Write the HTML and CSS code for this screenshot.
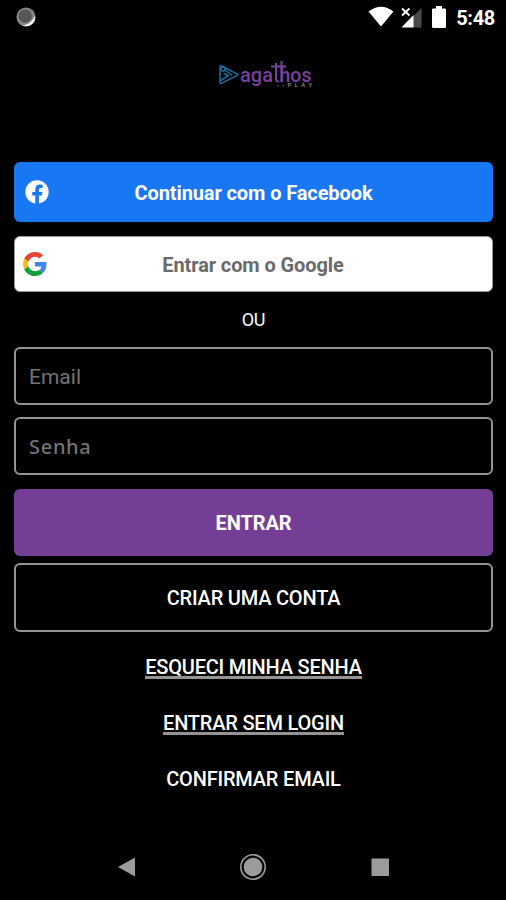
FILE: index.html
```
<!DOCTYPE html>
<html lang="pt-BR">
<head>
    <meta charset="UTF-8">
    <meta name="viewport" content="width=device-width, initial-scale=1.0">
    <title>Agathos Play</title>
    <link rel="stylesheet" href="styles.css">
</head>
<body>
    <header class="status-bar">
        <svg class="moon" width="20" height="20" viewBox="0 0 20 20">
            <circle cx="10" cy="10" r="9.6" fill="#858585"/>
            <path d="M19.2 9a9.4 9.4 0 0 1-13 9.6Q14 18 19.2 9z" fill="#f4f4f4"/>
            <circle cx="9.2" cy="9.2" r="6.6" fill="#565656"/>
        </svg>
        <div class="status-icons">
            <svg class="wifi" width="26" height="22" viewBox="0 0 26 22">
                <path d="M.5 5.5Q13-4 25.500 5.500L13 20.500z" fill="#fff"/>
            </svg>
            <svg class="signal" width="22" height="21" viewBox="0 0 22 21">
                <path d="M20.500 1v19.500H12V9.500z" fill="#4a4a4a"/>
                <path d="M12.500 8v12.500H.5z" fill="#fff"/>
                <path d="M1 1.500l7.500 7M8.500 1.500l-7.500 7" stroke="#fff" stroke-width="1.900"/>
            </svg>
            <svg class="battery" width="14" height="22" viewBox="0 0 14 22">
                <path d="M4 0h6v2.500h2.800q1.200 0 1.200 1.200v17q0 1.300-1.200 1.300H1.200Q0 22 0 20.700v-17Q0 2.500 1.200 2.500H4z" fill="#fff"/>
            </svg>
            <span class="clock">5:48</span>
        </div>
    </header>

    <main class="login">
        <svg class="logo" width="96" height="30" viewBox="0 0 96 30">
            <g fill="none" stroke="#1d6da3" stroke-width="1.500" stroke-linejoin="round" stroke-linecap="round">
                <path d="M2 7q0-1.600 1.600-1l15.400 7.800q1.600.9 0 1.800L3.600 23.200q-1.600.6-1.600-1z"/>
                <circle cx="5" cy="9" r="2"/>
                <path d="M7 10l6.500 5M2.500 20.500l8-5M6 13.500l4 2"/>
            </g>
            <g class="logo-name">
                <text x="22" y="22" textLength="33" lengthAdjust="spacingAndGlyphs">aga</text>
                <text x="61.500" y="22" textLength="32" lengthAdjust="spacingAndGlyphs">hos</text>
            </g>
            <path d="M58 3v16q0 2.500 3 2.500M63.500 1v21M53 6.500h15" fill="none" stroke="#79409b" stroke-width="2"/>
            <text class="logo-play" x="59" y="27" textLength="35">››PLAY</text>
        </svg>

        <button class="btn facebook">
            <svg class="brand-icon" width="24" height="24" viewBox="0 0 24 24">
                <circle cx="12" cy="12" r="11.700" fill="#fff"/>
                <path d="M10.300 24v-8.500H7.200V12h3.100V9.400c0-3.100 1.800-4.800 4.600-4.800 1 0 2 .1 2.700.3v3h-1.700c-1.600 0-2 .9-2 1.900V12h3.500l-.6 3.500h-2.900V24z" fill="#1877f2"/>
            </svg>
            <span class="btn-label">Continuar com o Facebook</span>
        </button>
        <button class="btn google">
            <svg class="brand-icon" width="24" height="24" viewBox="0 0 48 48">
                <path fill="#ea4335" d="M24 9.500c3.540 0 6.710 1.220 9.210 3.600l6.850-6.850C35.900 2.380 30.470 0 24 0 14.620 0 6.510 5.380 2.560 13.220l7.980 6.190C12.430 13.720 17.740 9.500 24 9.500z"/>
                <path fill="#4285f4" d="M46.980 24.550c0-1.570-.15-3.090-.38-4.550H24v9.020h12.940c-.58 2.960-2.260 5.480-4.780 7.180l7.730 6c4.510-4.180 7.090-10.360 7.090-17.650z"/>
                <path fill="#fbbc05" d="M10.530 28.590c-.48-1.450-.76-2.990-.76-4.590s.27-3.140.76-4.590l-7.980-6.190C.92 16.460 0 20.120 0 24c0 3.880.92 7.540 2.560 10.780l7.970-6.190z"/>
                <path fill="#119f3e" d="M24 48c6.480 0 11.930-2.130 15.890-5.810l-7.730-6c-2.150 1.450-4.920 2.300-8.160 2.300-6.260 0-11.570-4.220-13.470-9.910l-7.980 6.190C6.510 42.620 14.620 48 24 48z"/>
            </svg>
            <span class="btn-label">Entrar com o Google</span>
        </button>

        <p class="divider">OU</p>

        <input class="field" type="email" placeholder="Email">
        <input class="field password" type="password" placeholder="Senha">
        <button class="btn enter"><span class="btn-label">ENTRAR</span></button>
        <button class="btn create"><span class="btn-label">CRIAR UMA CONTA</span></button>

        <nav class="links">
            <a class="link forgot">ESQUECI MINHA SENHA</a>
            <a class="link guest">ENTRAR SEM LOGIN</a>
            <a class="link confirm">CONFIRMAR EMAIL</a>
        </nav>
    </main>

    <footer class="nav-bar">
        <svg width="28" height="28" viewBox="0 0 28 28"><path d="M23 4.500v19L6 14z" fill="#9b9b9b"/></svg>
        <svg width="28" height="28" viewBox="0 0 28 28">
            <circle cx="14" cy="14" r="12.200" fill="none" stroke="#9b9b9b" stroke-width="1.600"/>
            <circle cx="14" cy="14" r="9.300" fill="#9b9b9b"/>
        </svg>
        <svg width="28" height="28" viewBox="0 0 28 28"><path d="M5.500 5.500h17.500V23H5.500z" fill="#9b9b9b"/></svg>
    </footer>
</body>
</html>
```
FILE: styles.css
```
* {
    margin: 0;
    padding: 0;
    box-sizing: border-box;
}
body {
    font-family: Roboto, sans-serif;
    color: #fff;
    background: #000;
    height: 900px;
    display: flex;
    flex-direction: column;
    overflow: hidden;
}
.status-bar {
    height: 36px;
    display: flex;
    justify-content: space-between;
    padding: 7px 11px 0 16px;
}
.status-icons {
    display: flex;
    align-items: flex-start;
}
.wifi {
    margin-top: -1px;
}
.signal {
    margin-left: 7px;
}
.battery {
    margin-left: 9px;
    margin-top: -1px;
}
.clock {
    font-size: 20px;
    font-weight: 700;
    line-height: 24px;
    letter-spacing: -0.3px;
    margin-left: 10px;
    margin-top: -1px;
}
.login {
    flex: 1;
    display: flex;
    flex-direction: column;
    padding: 24px 13px 0 14px;
}
.logo {
    align-self: center;
    margin-left: 24px;
    margin-bottom: 72px;
    overflow: visible;
}
.logo-name {
    font-family: Roboto, sans-serif;
    font-size: 21px;
    font-weight: 500;
    fill: #79409b;
}
.logo-play {
    font-size: 6px;
    fill: #a5a5a5;
}
.btn {
    display: flex;
    align-items: center;
    flex-shrink: 0;
    border: none;
    border-radius: 6px;
    color: #fff;
    font-family: Roboto, sans-serif;
    font-size: 20px;
    font-weight: 700;
    letter-spacing: -0.1px;
}
.btn-label {
    flex: 1;
    text-align: center;
}
.brand-icon {
    margin-right: -24px;
}
.facebook {
    height: 60px;
    background: #1877f2;
    padding: 0 0 0 11px;
    margin-bottom: 14px;
}
.facebook .btn-label {
    margin-right: 11px;
    padding-top: 2px;
}
.google {
    height: 56px;
    background: #fff;
    color: #6b6b6b;
    border: 1px solid #999;
    padding-left: 8px;
}
.google .btn-label {
    margin-right: 9px;
    padding-top: 1px;
}
.divider {
    height: 55px;
    line-height: 56px;
    text-align: center;
    font-size: 18px;
    letter-spacing: -0.4px;
}
.field {
    height: 58px;
    flex-shrink: 0;
    background: #000;
    border: 2px solid #949494;
    border-radius: 6px;
    padding: 1px 13px 0;
    color: #fff;
    font-family: Roboto, sans-serif;
    font-size: 21px;
    margin-bottom: 12px;
}
.field::placeholder {
    color: #747474;
    opacity: 1;
}
.password {
    font-family: "Noto Sans", sans-serif;
    font-size: 20px;
    font-weight: 500;
    letter-spacing: 0.7px;
    margin-bottom: 14px;
}
.enter {
    height: 67px;
    background: #743e96;
    margin-bottom: 7px;
}
.create {
    height: 69px;
    background: #000;
    border: 2px solid #949494;
    font-weight: 500;
    letter-spacing: -0.2px;
}
.links {
    display: flex;
    flex-direction: column;
    align-items: center;
    gap: 32px;
    padding-top: 23px;
}
.link {
    font-size: 20px;
    font-weight: 500;
    line-height: 24px;
    letter-spacing: -0.2px;
}
.forgot, .guest {
    box-shadow: inset 0 -3px #949494;
    height: 24px;
}
.nav-bar {
    height: 67px;
    display: flex;
    justify-content: center;
    gap: 99px;
    padding-top: 20px;
}
```
